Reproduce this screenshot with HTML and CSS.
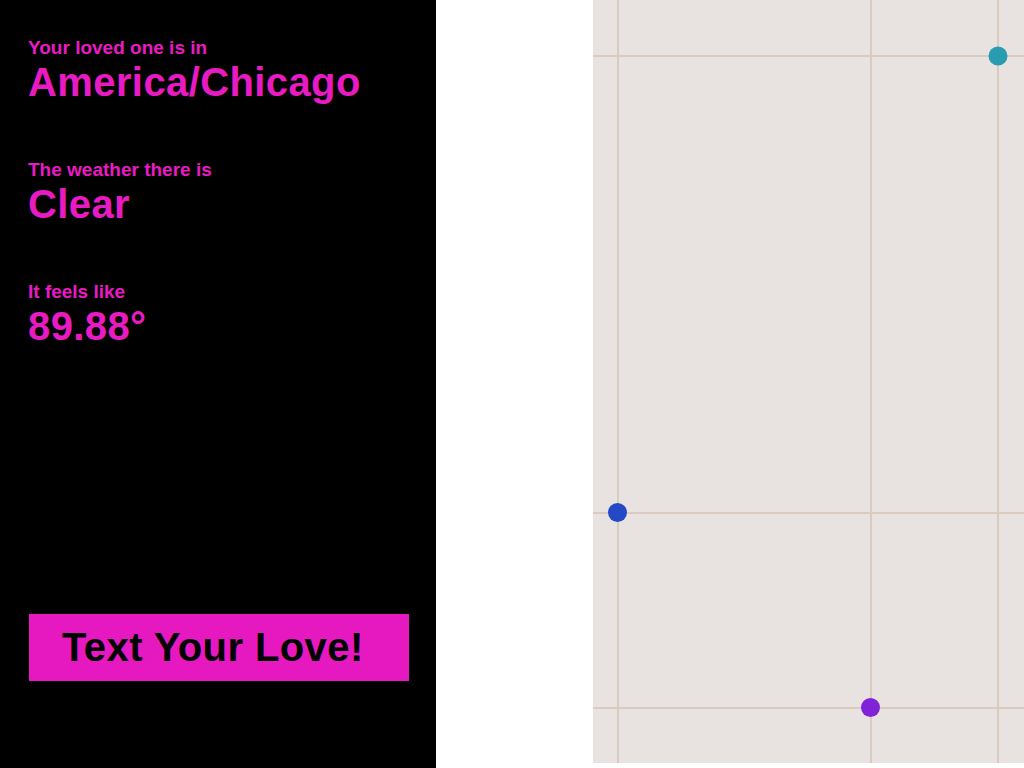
FILE: index.html
```html
<!DOCTYPE html>
<html>
<head>
<meta charset="utf-8">
<link rel="stylesheet" href="styles.css">
</head>
<body>
<div class="page">
  <aside class="panel">
    <section class="info">
      <div class="label">Your loved one is in</div>
      <div class="value">America/Chicago</div>
    </section>
    <section class="info">
      <div class="label">The weather there is</div>
      <div class="value">Clear</div>
    </section>
    <section class="info">
      <div class="label">It feels like</div>
      <div class="value">89.88°</div>
    </section>
    <button class="cta">Text Your Love!</button>
  </aside>
  <div class="map">
    <svg class="map-svg" width="431" height="763" viewBox="0 0 431 763">
      <rect width="431" height="763" fill="#e8e3e0"/>
      <g stroke="#d9ccbf" stroke-width="2">
        <line x1="25" y1="0" x2="25" y2="763"/>
        <line x1="278" y1="0" x2="278" y2="763"/>
        <line x1="405" y1="0" x2="405" y2="763"/>
        <line x1="0" y1="56" x2="431" y2="56"/>
        <line x1="0" y1="513" x2="431" y2="513"/>
        <line x1="0" y1="708" x2="431" y2="708"/>
      </g>
      <circle cx="405" cy="56" r="9.5" fill="#2a9cb0"/>
      <circle cx="24.5" cy="512.5" r="9.5" fill="#2549c6"/>
      <circle cx="277.5" cy="707.5" r="9.5" fill="#7f22d8"/>
    </svg>
  </div>
</div>
</body>
</html>
```
FILE: styles.css
```css
html, body {
  margin: 0;
  padding: 0;
  background: #ffffff;
}
.page {
  display: flex;
  align-items: flex-start;
  width: 1024px;
  height: 768px;
  overflow: hidden;
}
.panel {
  box-sizing: border-box;
  width: 436px;
  height: 768px;
  background: #000000;
  padding: 37px 0 87px 28px;
  display: flex;
  flex-direction: column;
  gap: 54px;
  font-family: "Liberation Sans", Arial, Helvetica, sans-serif;
  font-weight: bold;
  color: #e81bc3;
}
.label {
  font-size: 19px;
  line-height: 22px;
}
.value {
  font-size: 40px;
  line-height: 46px;
  letter-spacing: 0.4px;
}
.cta {
  margin-top: auto;
  margin-left: 1px;
  width: 380px;
  height: 67px;
  border: none;
  background: #e619c0;
  color: #000000;
  font-family: "Liberation Sans", Arial, Helvetica, sans-serif;
  font-weight: bold;
  font-size: 40px;
  line-height: 67px;
  letter-spacing: 0.4px;
  text-align: left;
  padding: 0 0 0 33px;
}
.map {
  margin-left: 157px;
  width: 431px;
  height: 763px;
}
.map-svg {
  display: block;
}
```
